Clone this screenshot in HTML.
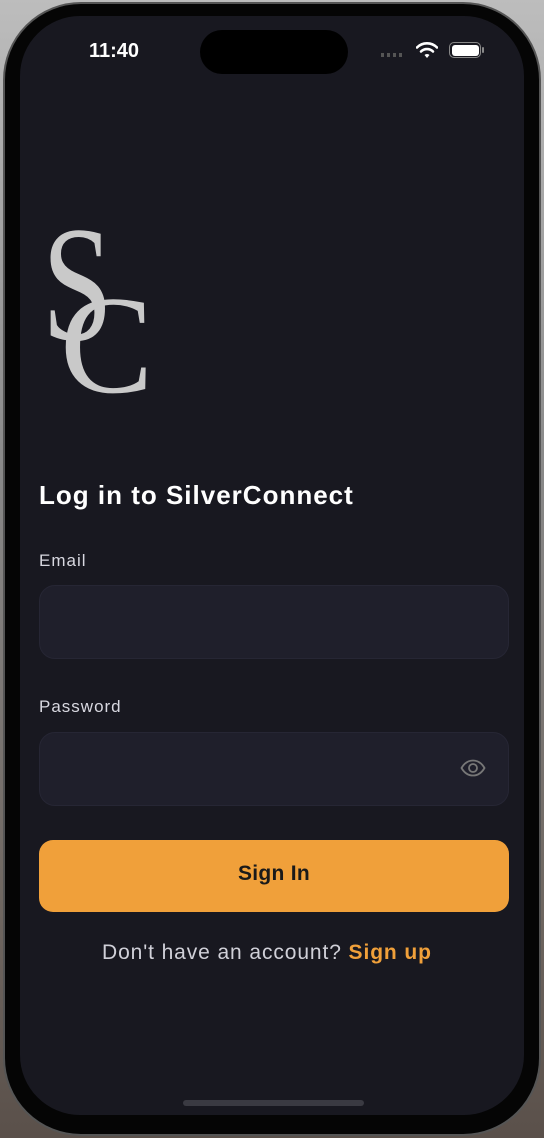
<!DOCTYPE html>
<html><head><meta charset="utf-8"><style>
*{margin:0;padding:0;box-sizing:border-box}
html,body{width:544px;height:1138px;overflow:hidden}
body{background:linear-gradient(180deg,#bdbdbd 0%,#8a8a8a 40%,#6e6660 80%,#5a504a 100%);position:relative;font-family:"Liberation Sans",sans-serif}
.body{position:absolute;left:3px;top:2px;width:538px;height:1134px;border-radius:78px;background:#050505;border:2px solid #555}
.screen{position:absolute;left:20px;top:16px;width:504px;height:1099px;border-radius:60px;background:#181820;overflow:hidden}
.t{position:absolute;color:#fff;white-space:nowrap}
.island{position:absolute;left:180px;top:14px;width:148px;height:44px;border-radius:22px;background:#000}
.inp{position:absolute;left:19px;width:470px;height:74px;border-radius:16px;background:#1f1f2b;border:1px solid #262634}
.btn{position:absolute;left:19px;top:824px;width:470px;height:72px;border-radius:14px;background:#f0a03a}
.logo{position:absolute;font-family:"Liberation Serif",serif;color:#c9c9c9;font-weight:400;transform-origin:0 0}
</style></head><body>
<div class="body"></div>
<div class="screen">
  <div class="t" style="left:69px;top:24px;font-size:20px;font-weight:600">11:40</div>
  <div class="island"></div>
  <div style="position:absolute;left:361px;top:37px;width:22px;height:4px;background:repeating-linear-gradient(90deg,#555 0 3px,transparent 3px 6px)"></div>
  <svg style="position:absolute;left:396px;top:25px" width="22" height="18" viewBox="0 0 22 18"><path d="M1 6.5a14 14 0 0 1 20 0" stroke="#fff" stroke-width="2.6" fill="none" stroke-linecap="round"/><path d="M5 10.5a8.5 8.5 0 0 1 12 0" stroke="#fff" stroke-width="2.6" fill="none" stroke-linecap="round"/><path d="M8.5 14l2.5 3 2.5-3a3.5 3.5 0 0 0-5 0z" fill="#fff"/></svg>
  <div style="position:absolute;left:429px;top:26px;width:32px;height:16px;border-radius:5px;border:1.5px solid #888;padding:1.5px"><div style="width:100%;height:100%;background:#fff;border-radius:3px"></div></div>
  <div style="position:absolute;left:462px;top:31px;width:2px;height:6px;background:#888;border-radius:1px"></div>

  <div class="logo" style="left:22px;top:186px;font-size:150px;line-height:1;transform:scale(0.85,1.1)">S</div>
  <div class="logo" style="left:40px;top:260px;font-size:140px;line-height:1">C</div>

  <div class="t" style="left:19px;top:464px;font-size:26px;font-weight:700;letter-spacing:1px">Log in to SilverConnect</div>
  <div class="t" style="left:19px;top:535px;font-size:17px;color:#d8d8e0;letter-spacing:1px">Email</div>
  <div class="inp" style="top:569px"></div>
  <div class="t" style="left:19px;top:681px;font-size:17px;color:#d8d8e0;letter-spacing:1px">Password</div>
  <div class="inp" style="top:716px"></div>
  <svg style="position:absolute;left:440px;top:743px" width="26" height="18" viewBox="0 0 26 18"><path d="M1.5 9C5 3 9 1.5 13 1.5S21 3 24.5 9C21 15 17 16.5 13 16.5S5 15 1.5 9z" stroke="#777" stroke-width="1.8" fill="none"/><circle cx="13" cy="9" r="4" stroke="#777" stroke-width="1.8" fill="none"/></svg>
  <div class="btn"></div>
  <div class="t" style="left:19px;width:470px;text-align:center;top:846px;font-size:21px;font-weight:700;color:#1a1a1a;letter-spacing:0.3px">Sign In</div>
  <div class="t" style="left:82px;top:925px;font-size:21px;color:#d0d0d8;letter-spacing:0.9px">Don't have an account?&nbsp;<b style="color:#f0a03a">Sign up</b></div>
  <div style="position:absolute;left:163px;top:1084px;width:181px;height:6px;border-radius:3px;background:#3a3a42"></div>
</div>
</body></html>
